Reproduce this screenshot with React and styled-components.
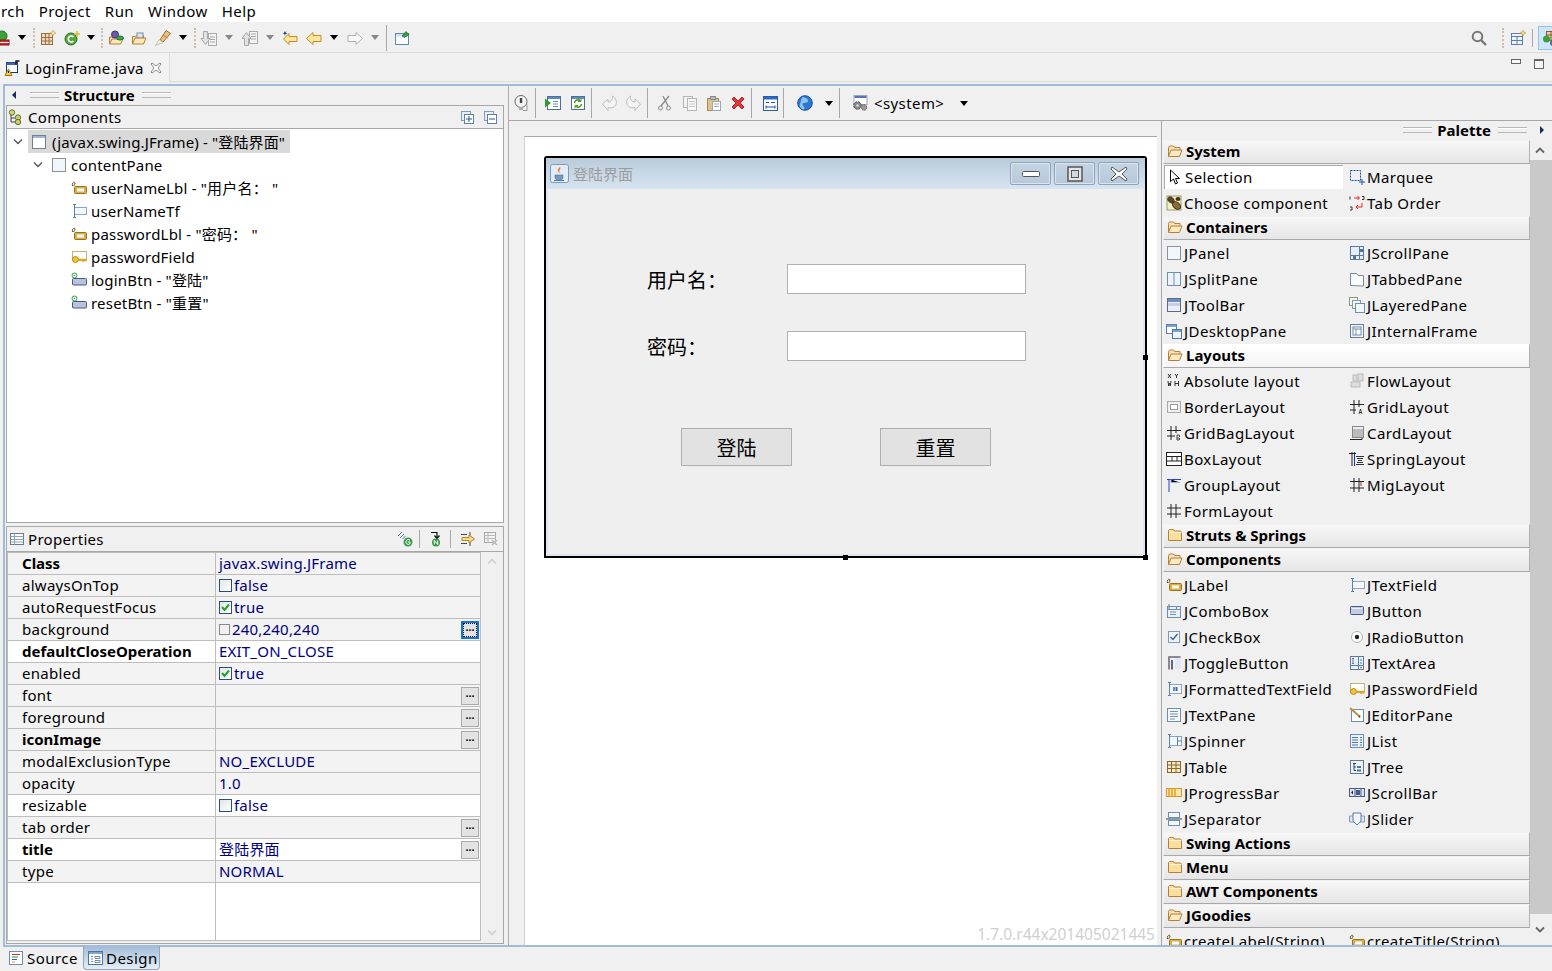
import React from "react";
import styled, { createGlobalStyle } from "styled-components";

const FONT = `"Noto Sans", "Noto Sans CJK SC", sans-serif`;

const Global = createGlobalStyle`
  html, body { margin: 0; padding: 0; background: #f0f0f0; overflow: hidden; }
  body { font: 15px ${FONT}; color: #000; letter-spacing: .3px; }
  * { box-sizing: border-box; }
`;

const Page = styled.div`width:1552px;height:971px;display:flex;flex-direction:column;overflow:hidden;background:#f0f0f0;`;
const MenuBar = styled.div`height:22px;flex:none;background:#fff;display:flex;align-items:center;gap:14px;padding-left:1px;line-height:22px;letter-spacing:.45px;`;
const MainBar = styled.div`height:31px;flex:none;display:flex;align-items:center;padding-top:1px;border-bottom:1px solid #dcdcdc;overflow:hidden;`;
const Spacer = styled.div`flex:1;`;
const Svg = styled.svg`display:block;width:16px;height:16px;flex:none;margin-left:${p => p.$ml || 0}px;overflow:visible;`;
const Arrow = styled.i`display:block;flex:none;width:0;height:0;border-left:4.5px solid transparent;border-right:4.5px solid transparent;border-top:5px solid ${p => p.$off ? "#888" : "#000"};margin-left:${p => p.$ml || 0}px;`;
const Dots = styled.i`display:block;flex:none;width:2px;height:20px;border-left:2px dotted #c9c2a8;margin-left:${p => p.$ml || 0}px;`;
const Sep = styled.i`display:block;flex:none;width:1px;height:${p => p.$h || 30}px;background:${p => p.$c || "#a8a8a8"};margin-left:${p => p.$ml || 0}px;`;
const ActiveTool = styled.div`flex:none;margin:0 -10px 0 5px;width:24px;height:24px;padding:3px;background:#cfe6f8;border:1px solid #90c4ec;`;

const TabRow = styled.div`height:29px;flex:none;display:flex;border-bottom:1px solid #dcdcdc;`;
const EditorTab = styled.div`width:170px;height:29px;display:flex;align-items:center;background:#f2f2f2;border-right:1px solid #dcdcdc;padding-left:5px;gap:4px;letter-spacing:.15px;`;
const TabClose = styled.svg`width:12px;height:12px;margin-left:3px;`;
const ViewControls = styled.div`margin-left:auto;display:flex;align-items:flex-start;gap:13px;padding:6px 8px 0 0;`;
const MinBtn = styled.i`display:block;width:10px;height:5px;border:1px solid #666;background:#f5f5f5;`;
const MaxBtn = styled.i`display:block;width:10px;height:10px;border:1px solid #666;border-top-width:2px;background:#f5f5f5;`;

const Editor = styled.div`margin:2px 0 0 3px;height:863px;flex:none;display:flex;border-top:2px solid #a1bcd8;border-bottom:2px solid #a1bcd8;border-left:2px solid #a1bcd8;`;
const LeftColumn = styled.div`width:504px;flex:none;display:flex;flex-direction:column;border-right:1px solid #ababab;padding:0 4px 1px 1px;`;
const StructureHead = styled.div`height:19px;flex:none;display:flex;align-items:center;padding:0 0 2px 6px;`;
const SideTri = styled.i`display:block;flex:none;width:0;height:0;border-top:4px solid transparent;border-bottom:4px solid transparent;${p => p.$right ? "border-left:4px solid #12305a;" : "border-right:4px solid #12305a;"}`;
const Grip = styled.i`display:block;flex:none;width:29px;height:6px;border-top:1px solid #b8b8b8;border-bottom:1px solid #b8b8b8;margin:${p => p.$m || "0"};box-shadow:inset 0 1px 0 #fff;`;
const Title = styled.b`font-weight:700;font-size:15px;letter-spacing:0;white-space:nowrap;`;
const Box = styled.section`border:1px solid #a8a8a8;display:flex;flex-direction:column;${p => p.$h ? `height:${p.$h}px;flex:none;margin-top:3px;` : "flex:1;"}`;
const BoxHead = styled.div`height:${p => p.$h || 23}px;flex:none;display:flex;align-items:center;padding-left:${p => p.$pl || 1}px;gap:${p => p.$gap || 3}px;border-bottom:1px solid #a8a8a8;background:#f0f0f0;`;
const HeadTools = styled.div`margin-left:auto;display:flex;align-items:center;padding-right:${p => p.$pr}px;`;
const Tree = styled.div`flex:1;background:#fff;padding-top:1px;`;
const TreeRow = styled.div`height:23px;display:flex;align-items:center;padding-left:${p => p.$pad}px;white-space:nowrap;letter-spacing:.2px;`;
const Chevron = styled.svg`width:10px;height:7px;flex:none;`;
const Selected = styled.div`display:flex;align-items:center;gap:5px;height:23px;background:#d9d9d9;margin-left:5px;padding:0 5px 0 3px;letter-spacing:.15px;`;
const NodeLabel = styled.span`margin-left:${p => p.$ml || 4}px;`;

const PropTable = styled.div`flex:1;display:flex;background:#f0f0f0;`;
const Grid = styled.div`width:474px;flex:none;border:1px solid #bdbdbd;margin-bottom:2px;background:#fff;display:flex;flex-direction:column;`;
const PropRow = styled.div`height:22px;flex:none;display:flex;border-bottom:1px solid #bdbdbd;background:${p => p.$white ? "#fff" : "#f3f3f3"};`;
const PropName = styled.div`width:208px;flex:none;padding-left:14px;border-right:1px solid #bdbdbd;line-height:21px;font-weight:${p => p.$bold ? 700 : 400};letter-spacing:${p => p.$bold ? 0 : ".28px"};white-space:nowrap;`;
const PropValue = styled.div`flex:1;display:flex;align-items:center;padding-left:3px;padding-right:1px;color:#00007f;line-height:21px;letter-spacing:.2px;white-space:nowrap;`;
const EmptyRow = styled.div`flex:1;display:flex;`;
const EmptyCell = styled.div`width:208px;border-right:1px solid #bdbdbd;`;
const Check = styled.i`display:flex;align-items:center;justify-content:center;width:13px;height:13px;flex:none;margin-right:2px;border:1px solid #25507c;background:linear-gradient(135deg,#e4e4e4,#fff);`;
const Swatch = styled.i`display:block;width:11px;height:11px;flex:none;margin-right:2px;border:1px solid #888;background:#f0f0f0;`;
const Ellipsis = styled.div`width:18px;height:18px;margin-left:auto;flex:none;display:flex;align-items:center;justify-content:center;padding-bottom:6px;background:#e3e3e3;border:${p => p.$focus ? "2px solid #0a78e0" : "1px solid #aaa"};${p => p.$focus ? "outline:1px dotted #000;outline-offset:-3px;" : ""}color:#000;font:700 11px/8px "Liberation Sans",sans-serif;letter-spacing:0;`;
const PropScroll = styled.div`flex:1;display:flex;flex-direction:column;justify-content:space-between;align-items:center;padding:6px 0 7px;`;

const RightColumn = styled.div`flex:1;min-width:0;display:flex;flex-direction:column;`;
const DesignBar = styled.div`height:35px;flex:none;display:flex;align-items:center;border-bottom:1px solid #a8a8a8;background:#f0f0f0;`;
const SystemLabel = styled.span`margin-left:6px;width:70px;white-space:nowrap;letter-spacing:.4px;`;
const Body = styled.div`flex:1;min-height:0;display:flex;`;
const CanvasPane = styled.div`width:652px;flex:none;padding:15px 4px 0 15px;display:flex;`;
const Canvas = styled.div`flex:1;position:relative;background:#fff;border-top:1px solid #a8a8a8;border-left:1px solid #d0d0d0;overflow:hidden;`;
const Version = styled.span`position:absolute;right:2px;bottom:1px;color:#cfcfcf;font-size:15.5px;line-height:20px;letter-spacing:0;white-space:nowrap;`;
const Frame = styled.div`position:absolute;left:19px;top:19px;width:603px;height:402px;border:2px solid #000;border-radius:3px 3px 0 0;background:#efefef;display:flex;flex-direction:column;letter-spacing:0;`;
const Handle = styled.i`position:absolute;width:5px;height:5px;background:#000;left:${p => p.$x}px;top:${p => p.$y}px;`;
const WinBar = styled.div`height:31px;flex:none;display:flex;align-items:center;padding:0 6px 0 4px;background:linear-gradient(#b9cad9,#d7e5f2);`;
const WinTitle = styled.span`color:#9c9c9c;font-size:15px;margin-left:4px;`;
const WinButtons = styled.div`margin-left:auto;display:flex;gap:3px;`;
const WinButton = styled.div`width:41px;height:23px;display:flex;align-items:center;justify-content:center;border:1px solid #8ea4ba;border-radius:2px;background:linear-gradient(#c4d4e2,#b6c8da);box-shadow:inset 0 0 0 1px #dbe5ee;`;
const WinBody = styled.div`flex:1;border:solid #dbe6f0;border-width:0 2px 2px;padding:75px 0 0 99px;display:flex;flex-direction:column;`;
const FormRow = styled.div`display:flex;align-items:center;height:30px;margin-bottom:37px;`;
const FormLabel = styled.label`width:140px;flex:none;font-size:20px;line-height:30px;position:relative;top:2px;`;
const Input = styled.div`width:239px;height:30px;border:1px solid #b0b0b0;background:#fff;`;
const ButtonRow = styled.div`display:flex;gap:88px;margin:30px 0 0 34px;`;
const FormButton = styled.div`width:111px;height:38px;border:1px solid #aeaeae;background:#e2e2e2;font-size:20px;line-height:40px;text-align:center;overflow:hidden;`;

const Palette = styled.div`flex:1;min-width:0;display:flex;flex-direction:column;border-left:1px solid #a8a8a8;`;
const PaletteHead = styled.div`height:19px;flex:none;display:flex;align-items:center;justify-content:flex-end;padding:0 8px 2px 0;`;
const PaletteBody = styled.div`flex:1;min-height:0;display:flex;overflow:hidden;`;
const PaletteList = styled.div`width:368px;flex:none;padding-left:1px;overflow:hidden;`;
const Category = styled.div`height:24px;display:flex;align-items:center;gap:3px;padding:0 0 2px 3px;font-weight:700;letter-spacing:0;border:1px solid ${p => p.$hi ? "#fff" : "#f2f2f2"};border-right-color:#b0b0b0;border-bottom-color:#a8a8a8;background:linear-gradient(${p => p.$hi ? "#fff,#f4f4f4" : "#f7f7f7,#e6e6e6"});`;
const Items = styled.div`display:grid;grid-template-columns:183px 1fr;grid-auto-rows:26px;background:#f0f0f0;letter-spacing:.42px;`;
const Item = styled.div`display:flex;align-items:center;gap:2px;padding-left:3px;white-space:nowrap;${p => p.$sel ? "background:#fff;height:24px;margin:1px 3px 0 1px;padding:0 0 2px 2px;border-top:1px solid #aaa;border-left:1px solid #aaa;" : ""}`;
const PaletteScroll = styled.div`flex:1;display:flex;flex-direction:column;`;
const ScrollBtn = styled.div`height:${p => p.$h}px;flex:none;display:flex;align-items:center;justify-content:center;padding-right:3px;`;
const Track = styled.div`flex:1;background:#c9c9c9;`;

const BottomTabs = styled.div`height:24px;flex:none;display:flex;margin-top:-1px;padding-left:3px;letter-spacing:.45px;`;
const PageTab = styled.div`width:${p => p.$w}px;height:24px;display:flex;align-items:center;gap:3px;padding-left:${p => p.$pl}px;${p => p.$on ? "background:linear-gradient(#a1bcd8,#e6eef6);border:1px solid #8ea7bf;border-top:0;border-radius:0 0 4px 4px;" : ""}`;

const I = {
  run: <><circle cx="8" cy="6" r="5" fill="#3aa23a" stroke="#1f6f1f"/><rect x="6" y="10" width="9" height="5" fill="#d92b2b" stroke="#8a1010"/><path d="M6 12.5h9" stroke="#fff"/></>,
  newFrame: <><rect x="1.5" y="3.5" width="11" height="11" fill="#eed9bc" stroke="#9a7040"/><path d="M1.5 7.5h11M1.5 11h11M5.5 3.5v11M9 3.5v11" stroke="#9a7040"/><path d="M13 0l1 2 2 1-2 1-1 2-1-2-2-1 2-1z" fill="#f7e6a8" stroke="#b8902a" strokeWidth=".5"/></>,
  newClass: <><circle cx="7" cy="9" r="6" fill="#4fa83d" stroke="#2b6d21"/><path d="M9.5 7a3 3 0 1 0 0 4" fill="none" stroke="#fff" strokeWidth="1.6"/><path d="M13 1v6M10 4h6" stroke="#e5b83a" strokeWidth="1.5"/></>,
  openType: <><path d="M1.5 14V7h10v2" fill="#f7e3b5" stroke="#b5813a"/><path d="M1.5 14l2.5-5h11l-2.5 5z" fill="#fbe9b9" stroke="#b5813a"/><circle cx="7" cy="4.5" r="3.5" fill="#6a5aa8" stroke="#3f3278"/><ellipse cx="12" cy="8" rx="3.5" ry="2" fill="#3fa648" stroke="#256d2b"/></>,
  openFolder: <><path d="M1.5 14V6.5h3l1-1h7v3" fill="#f7e3b5" stroke="#b5813a"/><rect x="6" y="3" width="6" height="5" fill="#dbe8f4" stroke="#6f8fb0"/><path d="M1.5 14l2.5-6h11l-2.5 6z" fill="#fbe9b9" stroke="#b5813a"/></>,
  torch: <><path d="M5 10L11 .5 15.5 3.5 8 12z" fill="#e9c184" stroke="#9a7238"/><path d="M8 5l4.5 3" stroke="#b5813a"/><path d="M.5 15.5L4 9.5 8 12.5z" fill="#f6f2dc" stroke="#c4c4aa"/></>,
  nextAnn: <><rect x="7.5" y="3.5" width="8" height="12" fill="#f3f3f3" stroke="#aaa"/><path d="M9 7h5M9 9.5h5M9 12h5" stroke="#aaa"/><path d="M2.5 1.5h4v7h2.5l-4.500 6-4.500-6h2.500z" fill="#e2e2e2" stroke="#a8a8a8"/></>,
  prevAnn: <><rect x="7.5" y="1.5" width="8" height="12" fill="#f3f3f3" stroke="#aaa"/><path d="M9 4h5M9 6.5h5M9 9h5" stroke="#aaa"/><path d="M2.5 15.5h4v-7h2.5l-4.500-6-4.500 6h2.500z" fill="#e2e2e2" stroke="#a8a8a8"/></>,
  lastEdit: <><path d="M7 3.5v3h8v5H7v3L1.5 9z" fill="#fde6a1" stroke="#c58d1e"/><path d="M2 1l1 1.5L4.5 1 4 3l1.5 1L3.5 4 3 6 2.3 4 .5 4 2 3z" fill="#2c4f88"/></>,
  back: <><path d="M7 2.5v3h8v6H7v3L.5 8.5z" fill="#fde6a1" stroke="#c58d1e"/></>,
  forward: <><path d="M9 2.5v3H1v6h8v3l6.5-6z" fill="#f7f7f7" stroke="#b0b0b0"/></>,
  pinWin: <><rect x=".5" y="3.5" width="13" height="11" fill="#f8fbff" stroke="#5f86ad"/><rect x="1" y="4" width="12" height="2.5" fill="#cfe0f0"/><path d="M7 6l4-4.500 3 3-4.500 3z" fill="#38a044" stroke="#1d6a28" strokeWidth=".7"/></>,
  search: <><circle cx="6.5" cy="6.5" r="4.8" fill="none" stroke="#777" strokeWidth="2"/><path d="M10 10l5 5" stroke="#777" strokeWidth="2.4"/></>,
  persp: <><rect x="1.5" y="3.5" width="11" height="11" fill="#eef3f8" stroke="#5c80a8"/><path d="M1.5 6.5h11M1.5 10.5h11M7 6.5v8" stroke="#5c80a8"/><path d="M13 0l1 2 2 1-2 1-1 2-1-2-2-1 2-1z" fill="#f7d774" stroke="#b8902a" strokeWidth=".5"/></>,
  perspOn: <><rect x="4.5" y="1.5" width="10" height="9" fill="#e8cfa8" stroke="#8a5a2c"/><path d="M4.5 5h10M9 1.5v9" stroke="#8a5a2c"/><circle cx="4.5" cy="9" r="3.5" fill="#3aa23a"/><circle cx="11" cy="13" r="3" fill="#6a5aa8"/></>,
  file: <><rect x="1.5" y="2.5" width="11" height="10" fill="#fff" stroke="#123a7a"/><rect x="1.5" y="2.5" width="11" height="2.5" fill="#3c63a8"/><path d="M11 4.5V1h3.500" fill="none" stroke="#111" strokeWidth="1.4"/><path d="M3.5 9L7 15.5H0z" fill="#f6d040" stroke="#9a7a10"/><path d="M3.5 11v2" stroke="#222"/></>,
  comps: <><circle cx="4" cy="3.5" r="2.7" fill="#d6d08c" stroke="#5a7a20"/><circle cx="10" cy="8.5" r="2.7" fill="#cfc878" stroke="#5a7a20"/><circle cx="10" cy="13" r="2.7" fill="#cfc878" stroke="#5a7a20"/><path d="M3 6v7h4M3 9h4" fill="none" stroke="#444"/></>,
  expand: <><rect x="3.5" y="2.5" width="9" height="9" fill="#e8eff7" stroke="#7e9cbc"/><rect x="6.5" y="5.5" width="9" height="9" fill="#fff" stroke="#5c80a8"/><path d="M8 10h6M11 7v6" stroke="#2a5a8e"/></>,
  collapse: <><rect x="3.5" y="2.5" width="9" height="9" fill="#e8eff7" stroke="#7e9cbc"/><rect x="6.5" y="5.5" width="9" height="9" fill="#fff" stroke="#5c80a8"/><path d="M8 10h6" stroke="#2a5a8e"/></>,
  frame: <><rect x="1.5" y="1.5" width="13" height="13" fill="#fff" stroke="#6f7f90"/><rect x="2" y="2" width="12" height="2" fill="#9db8d6"/></>,
  panel: <><rect x="1.5" y="1.5" width="13" height="13" fill="#f2f6fb" stroke="#8892a0"/></>,
  label: <><path d="M1.5 6c-1-3 2-5 2.5-3s-2 1-1 3" fill="none" stroke="#6a4a10"/><rect x="3.5" y="6.5" width="12" height="7" rx="1" fill="#dcae48" stroke="#9a7018"/><rect x="6" y="8.5" width="7" height="3" fill="#fff"/></>,
  text: <><rect x="3.5" y="4.5" width="12" height="7" fill="#f4f8fc" stroke="#8aa6c4"/><path d="M2 1.5h3M2 14.5h3M3.5 1.5v13" stroke="#5c80a8"/></>,
  key: <><rect x="1.5" y="2.5" width="14" height="9" fill="#fff" stroke="#c9b070"/><circle cx="4.5" cy="10.5" r="3" fill="#f2c530" stroke="#b8881e"/><path d="M7 10.5h8M12 10.5v2.5M14.5 10.5v2" stroke="#d8a520" strokeWidth="1.6"/></>,
  btn: <><circle cx="3.5" cy="3.5" r="2.5" fill="#fff" stroke="#2e9a46"/><circle cx="3.5" cy="3.5" r=".8" fill="#2e9a46"/><rect x="1.5" y="6.5" width="14" height="6.5" rx="1" fill="#b9c4dc" stroke="#465a86"/></>,
  propTable: <><rect x="1.5" y="2.5" width="13" height="11" fill="#fff" stroke="#667c95"/><path d="M1.5 5.5h13M1.5 8.5h13M1.5 11h13M5.5 2.5v11" stroke="#8ea3ba"/></>,
  greenG: <><path d="M1 5l4-4M3 7l4-4M5.5 8l3-3" stroke="#4b7aa8"/><circle cx="11" cy="11" r="4.5" fill="#3f9a4b"/><path d="M13 9.3a2.4 2.4 0 1 0 0 3.4v-1.700h-2" fill="none" stroke="#fff"/></>,
  nullN: <><path d="M3 1.5h6v5M6.5 4.5L9 7.5l2.500-3" fill="none" stroke="#111" strokeWidth="1.2"/><circle cx="8" cy="11.5" r="4" fill="#379a45"/><path d="M6.3 13.5v-4l3.400 4v-4" fill="none" stroke="#fff"/></>,
  events: <><path d="M1 3.5h6M1 12.5h6M10 1v5M10 10v5" stroke="#445"/><path d="M2 6.5h7V4l5.500 4-5.500 4V9.5H2z" fill="#f6dc8e" stroke="#b8861e"/></>,
  sheet: <><rect x="1.5" y="1.5" width="11" height="10" fill="#f2f2f2" stroke="#aaa"/><path d="M1.5 4.5h11M1.5 7.5h11M5 1.5v10" stroke="#bbb"/><path d="M9 9l5 5M14 9l-5 5" stroke="#bbb" strokeWidth="1.5"/></>,
  source: <><rect x="1.5" y="1.5" width="13" height="13" fill="#fff" stroke="#6d8eb0"/><path d="M4 4.5h8" stroke="#c33"/><path d="M4 7h6" stroke="#2a9a46"/><path d="M4 9.5h5" stroke="#2a62c0"/><path d="M4 12h3" stroke="#e0a020"/></>,
  design: <><rect x="1.5" y="1.5" width="14" height="13" fill="#fff" stroke="#4f74a0"/><rect x="2" y="2" width="13" height="2" fill="#7da3cd"/><path d="M4 6.5h2M4 9h2M4 11.5h2M8 6.5h5v2H8zM8 10.5h5v2H8z" fill="none" stroke="#6d8eb0"/></>,
  bulb: <><circle cx="7" cy="6.5" r="6" fill="#f4f4f4" stroke="#666"/><path d="M7 3v5" stroke="#444" strokeWidth="2.4"/><rect x="5" y="12" width="4" height="3" fill="#aaa"/><path d="M13 9.5v6H9" fill="none" stroke="#999"/></>,
  sourceView: <><rect x="2.5" y="1.5" width="13" height="13" fill="#fff" stroke="#4f6f95"/><rect x="3" y="2" width="12" height="2" fill="#5a8cc2"/><path d="M8 6.5h5M8 9h5M8 11.5h5" stroke="#6d8eb0"/><path d="M0 3.5l6 4.5-6 4.500z" fill="#2e9a30"/></>,
  refresh: <><rect x="1.5" y="1.5" width="13" height="13" fill="#fff" stroke="#4f6f95"/><rect x="2" y="2" width="12" height="2" fill="#5a8cc2"/><path d="M4.5 8a3.5 3.5 0 0 1 6-2M11.5 9a3.5 3.5 0 0 1-6 2" fill="none" stroke="#4f9a1e" strokeWidth="1.6"/><path d="M11 3.5v3H8M5 13.5v-3h3" fill="none" stroke="#4f9a1e"/></>,
  undo: <><path d="M.5 9L6 4v3C9 7 11 5 10.5 1c4.500 3 5 8 2 10.500C10.500 13 8 13 6 12.500v3z" fill="#f4f4f4" stroke="#bcbcbc"/></>,
  redo: <><path d="M15.5 9L10 4v3C7 7 5 5 5.500 1 1 4 .5 9 3.500 11.500 5.500 13 8 13 10 12.500v3z" fill="#f4f4f4" stroke="#bcbcbc"/></>,
  cut: <><path d="M4 11L12 1M11 11L6 1" stroke="#8a8a8a" strokeWidth="1.3"/><circle cx="3.5" cy="13" r="2" fill="none" stroke="#8a8a8a"/><circle cx="11.5" cy="13" r="2" fill="none" stroke="#8a8a8a"/></>,
  copy: <><rect x="1.5" y="1.5" width="9" height="11" fill="#f3f3f3" stroke="#b5b5b5"/><rect x="5.5" y="3.5" width="9" height="12" fill="#f7f7f7" stroke="#b5b5b5"/><path d="M7 6.5h6M7 9h6M7 11.5h6" stroke="#c8c8c8"/></>,
  paste: <><rect x="1.5" y="3.5" width="11" height="12" fill="#dfc491" stroke="#a8894e"/><rect x="4.5" y="1.5" width="5" height="3" fill="#bbb" stroke="#888"/><rect x="6.5" y="6.5" width="8" height="9" fill="#fff" stroke="#9ab"/><path d="M8 9h5M8 11.5h5" stroke="#9ab"/></>,
  del: <><path d="M2 4l2-2 4 4 4-4 2 2-4 4 4 4-2 2-4-4-4 4-2-2 4-4z" fill="#e2383a" stroke="#b82426"/></>,
  layoutBtn: <><rect x="1.5" y="1.5" width="14" height="14" fill="#fff" stroke="#2a5aa8"/><rect x="2" y="2" width="13" height="2.5" fill="#2a6ac8"/><path d="M4 7.5h3M9 7.5h4M4 12h9M4 10.5v3M13 10.5v3" stroke="#1a4fb0"/></>,
  globe: <><circle cx="8" cy="8" r="7.3" fill="#2a78d0" stroke="#17509a"/><path d="M6 2c2 1 4 1 5 3s-2 3-4 3-2 2 0 4-1 3-2 2-3-3-2-5 1-6 3-7z" fill="#8fc4f2"/></>,
  gear: <><rect x="2" y=".5" width="13" height="9" fill="#fff" stroke="#9aa"/><rect x="2.5" y="1" width="12" height="2" fill="#5a6ec2"/><circle cx="5.5" cy="10.5" r="3.8" fill="#888" stroke="#555" strokeDasharray="2 1"/><circle cx="5.5" cy="10.5" r="1.3" fill="#ddd"/><circle cx="12" cy="12.5" r="2.8" fill="#999" stroke="#666" strokeDasharray="1.5 1"/></>,
  java: <><rect x=".5" y=".5" width="18" height="18" rx="2" fill="#e3ecf4" stroke="#7d99b5"/><path d="M10 3c2 2-2 3 0 6-3-1-3-4 0-6z" fill="#e8843a"/><path d="M5 11h8v2.500a2 2 0 0 1-2 2H7a2 2 0 0 1-2-2z" fill="#6f9cc2" stroke="#4f7397" strokeWidth=".6"/><path d="M4 16.500h10" stroke="#4f7397"/></>,
  folderOpen: <><path d="M1.5 13.5V4.5l1-1.500h4l1 1.500h5.500v2.500" fill="#f7e3b5" stroke="#b5813a"/><path d="M1.5 13.5L4 7h11l-2.500 6.500z" fill="#fbe9c0" stroke="#b5813a"/></>,
  folderClosed: <><path d="M1.5 13.5v-10l1-1h4l1 1.500h6l1 1v8.500z" fill="#fbdf9c" stroke="#b5813a"/><path d="M2 5.5h12.500" stroke="#fdf3d6"/></>,
  cursor: <><path d="M3.5 1v11.500l3-2.500 2 5 2-1-2-4.500h4z" fill="#fff" stroke="#000"/></>,
  marquee: <><rect x="1.5" y="1.5" width="10" height="10" fill="none" stroke="#1a4fb0" strokeDasharray="2 1"/><path d="M13 10v6M10 13h6" stroke="#1a4fb0"/></>,
  beans: <><rect x="1" y="1" width="14" height="14" fill="#eef0c8" stroke="#9a9a70"/><ellipse cx="5" cy="5" rx="4" ry="3" fill="#5a4326" transform="rotate(40 5 5)"/><ellipse cx="10.5" cy="10.5" rx="4.5" ry="3.2" fill="#8a6a36" stroke="#3f2f16" transform="rotate(40 10.5 10.5)"/><ellipse cx="12" cy="4" rx="2.5" ry="2" fill="#463218"/></>,
  tabOrder: <><path d="M1 1.5v3M13 1.5h2v3h-2M1 12h2v3H1" fill="none" stroke="#333"/><path d="M5 3h5M8.5 1l2 2-2 2M13 8v4H7M9 10l-2 2 2 2" fill="none" stroke="#e22"/></>,
  scrollPane: <><rect x="1.5" y="1.5" width="13" height="13" fill="#e6edf5" stroke="#5c7a9e"/><path d="M10.5 1.5v13M1.5 10.5h13" stroke="#5c7a9e"/><rect x="11" y="4" width="3" height="3" fill="#4f74a0"/><rect x="4" y="11" width="3" height="3" fill="#4f74a0"/></>,
  split: <><rect x="1.5" y="1.5" width="13" height="13" fill="#eef3f9" stroke="#6f8fb0"/><path d="M8 1.5v13" stroke="#6f8fb0"/></>,
  tabbed: <><path d="M1.5 14.5v-12h6l1.500 2h5.500v10.500z" fill="#fafbfd" stroke="#7a8a9a"/></>,
  toolbar: <><rect x="1.5" y="1.5" width="13" height="13" fill="#eef" stroke="#5a6b86"/><rect x="2" y="2" width="12" height="3" fill="#6d8ec2"/><rect x="2" y="6" width="12" height="3" fill="#c6cee4"/></>,
  layered: <><rect x=".5" y=".5" width="8" height="8" fill="#f5f5ef" stroke="#8a9a7a"/><rect x="3.5" y="3.5" width="8" height="8" fill="#f2f6fb" stroke="#8a9aa8"/><rect x="6.5" y="6.5" width="9" height="9" fill="#f2f6fb" stroke="#6f8fb0"/></>,
  desktop: <><rect x=".5" y="1.5" width="10" height="9" fill="#fff" stroke="#5c80a8"/><rect x="1" y="2" width="9" height="2" fill="#7da3cd"/><rect x="6.5" y="6.5" width="9" height="9" fill="#eef3f9" stroke="#4f74a0"/><rect x="7" y="7" width="8" height="2" fill="#7da3cd"/></>,
  internal: <><rect x="1.5" y="1.5" width="13" height="13" fill="#eef3f9" stroke="#6f7f90"/><rect x="4" y="4" width="8" height="8" fill="#fff" stroke="#6f8fb0"/><path d="M4 6h8M7 6v6" stroke="#6f8fb0"/></>,
  absolute: <><path d="M2 1l3 4M5 1L2 5M9 1l1.500 2L12 1M10.500 3v2M2 8l.7 5 .8-3 .8 3 .7-5M9 8v5M12.500 8v5M9 10.500h3.500" fill="none" stroke="#333"/></>,
  flow: <><rect x="4" y="2" width="4" height="6" fill="#ddd" stroke="#bbb"/><rect x="9" y="1" width="5" height="7" fill="#ddd" stroke="#bbb"/><rect x="2" y="9" width="9" height="5" fill="#ddd" stroke="#bbb"/></>,
  borderL: <><rect x="1.5" y="2.5" width="13" height="11" fill="#eee" stroke="#aaa"/><rect x="4.5" y="5.5" width="7" height="5" fill="#fff" stroke="#999"/></>,
  gridA: <><path d="M1 5.5h14M1 11h6M5 1v14M10 1v7" stroke="#222"/><path d="M10 15l1.500-5 1.500 5M10.500 13.500h2" fill="none" stroke="#222" strokeWidth=".8"/></>,
  gridB: <><path d="M1 5.5h14M1 11h8M5 1v14M10 1v7" stroke="#222"/><path d="M11 10v5h2l1-1-1-1h-2M11 10h2l1 1-1 1" fill="none" stroke="#222" strokeWidth=".8"/></>,
  card: <><path d="M1 14.5h12V3" fill="none" stroke="#222"/><rect x="3.5" y="1.5" width="11" height="11" fill="#bbb" stroke="#888"/><rect x="4" y="2" width="10" height="2" fill="#eee"/></>,
  box: <><rect x=".5" y="1.5" width="15" height="13" fill="#fff" stroke="#222"/><path d="M.5 5.5h15M.5 10h15M6 5.5V10M11 5.5V10" stroke="#222"/></>,
  spring: <><path d="M0 2.5h7M3 1v14" stroke="#222"/><path d="M5.5 1v14" stroke="#1a2fc8"/><path d="M7 5.5h8M8 7.5h6M9 9.5h4M8 11.5h6M7 13.5h8" stroke="#333"/></>,
  group: <><path d="M1 2.5h14M3 2.5V15" stroke="#2a3fd0"/><path d="M5 2.5v3h9" stroke="#a0aee8"/></>,
  mig: <><path d="M1 4.5h14M1 11h14M5 1v14M10 1v14" stroke="#222"/><path d="M12 5v4" stroke="#a33"/></>,
  form: <><path d="M1 5h14M1 11h14M5 1v14M10 1v14" stroke="#222"/></>,
  combo: <><rect x="1.5" y="3.5" width="13" height="11" fill="#eaf0f7" stroke="#6f8fb0"/><path d="M1.5 6.5h13M4 9h6M4 11.5h6M10.5 3.5v3" stroke="#6f8fb0"/><path d="M3 1v5" stroke="#5c80a8"/></>,
  jbutton: <><rect x="1.5" y="3.5" width="13" height="8" rx="1" fill="#c3cce4" stroke="#465a86"/><path d="M3 5.5h10" stroke="#eef"/></>,
  checkbox: <><rect x="2.5" y="2.5" width="11" height="11" fill="#eef3f9" stroke="#7e9cbc"/><path d="M4.5 8l2.500 2.500 4.500-5.500" fill="none" stroke="#3a5f8a" strokeWidth="1.3"/></>,
  radio: <><circle cx="8" cy="8" r="5.5" fill="#fff" stroke="#a8bca8"/><circle cx="8" cy="8" r="2.2" fill="#222"/></>,
  toggle: <><rect x="9" y="2" width="6" height="12" fill="#e4e8f4"/><path d="M3 14.5V2h11.500" fill="none" stroke="#667" strokeWidth="1.5"/><path d="M6 14.5V5" stroke="#667" strokeWidth="2"/></>,
  textArea: <><rect x="1.5" y="1.5" width="13" height="13" fill="#eaf0f7" stroke="#5c7a9e"/><path d="M1.5 10.5h13M9.5 1.5v13M4 3.5v5M3 3.5h2M3 8.5h2M11 5h2M11 8h2M11 12.5h2" stroke="#5c7a9e"/></>,
  formatted: <><rect x="3.5" y="3.5" width="12" height="9" fill="#f4f8fc" stroke="#8aa6c4"/><path d="M2 1.5h3M2 14.5h3M3.5 1.5v13" stroke="#5c80a8"/><path d="M8 6v4M10.5 6v4M7 7h5M7 9h5" stroke="#1a4fb0" strokeWidth=".8"/></>,
  textPane: <><rect x="1.5" y="1.5" width="13" height="13" fill="#f4f8fc" stroke="#6f8fb0"/><path d="M4 4.5h8M4 7h8M4 9.5h8M4 12h5" stroke="#7a92aa"/></>,
  editor: <><rect x="2.5" y="2.5" width="12" height="12" fill="#fff" stroke="#6f8fb0"/><path d="M1 1l9 8" stroke="#b8903e" strokeWidth="2"/><path d="M10 9l1 1" stroke="#333" strokeWidth="2"/></>,
  spinner: <><rect x="3.5" y="3.5" width="12" height="9" fill="#f4f8fc" stroke="#8aa6c4"/><path d="M2 1.5h3M2 14.5h3M3.5 1.5v13M11.5 3.5v9M11.5 8h4" stroke="#5c80a8"/></>,
  list: <><rect x="1.5" y="1.5" width="13" height="13" fill="#eaf0f7" stroke="#6f8fb0"/><path d="M3 4.5h6M3 7h6M3 9.5h6M3 12h6M11 4.5h2M11 7h2M11 9.5h2M11 12h2" stroke="#4f74a0" strokeWidth="1.2"/></>,
  table: <><rect x="1.5" y="2.5" width="13" height="11" fill="#f5e8c8" stroke="#8a6a2c"/><path d="M1.5 6h13M1.5 9.5h13M5.5 2.5v11M10 2.500v11" stroke="#8a6a2c"/></>,
  jtree: <><rect x="1.5" y="1.5" width="13" height="13" fill="#eef3f9" stroke="#5c7a9e"/><path d="M4 4.5h3M5 4.5V11.5h2M5 8h2" fill="none" stroke="#345"/><rect x="8" y="7" width="4" height="2" fill="#4f74a0"/><rect x="8" y="10.5" width="4" height="2" fill="#4f74a0"/></>,
  progress: <><rect x=".5" y="3.5" width="15" height="8" fill="#fbe6b0" stroke="#d49a2e"/><path d="M3 4v7M6 4v7M9 4v7" stroke="#e8a020" strokeWidth="1.5"/></>,
  scrollbar: <><rect x=".5" y="3.5" width="15" height="8" fill="#dfe4f2" stroke="#4a5a86"/><path d="M6 4v7M12 4v7" stroke="#4a5a86"/><path d="M4 5.5l-2 2 2 2z" fill="#223"/><rect x="7" y="5" width="4" height="5" fill="#4a5a86"/></>,
  separator: <><rect x="2.5" y="1.5" width="11" height="5" fill="#f4f8fc" stroke="#6f8fb0"/><rect x="2.5" y="9.5" width="11" height="5" fill="#f4f8fc" stroke="#6f8fb0"/><path d="M0 8h16" stroke="#345"/></>,
  slider: <><path d="M.5 5h15v6H.5z" fill="#dfe7f2" stroke="#7e9cbc"/><path d="M4 2h8v8l-4 4-4-4z" fill="#f2f4fa" stroke="#5c7a9e"/></>,
};
const Ic = ({ n, ml, size }) => <Svg viewBox={size ? `0 0 ${size} ${size}` : "0 0 16 16"} $ml={ml} style={size ? { width: size, height: size } : undefined}>{I[n]}</Svg>;

const ChevDown = () => <Chevron viewBox="0 0 10 7"><path d="M1 1.5l4 4 4-4" fill="none" stroke="#555" strokeWidth="1.4" /></Chevron>;
const ChevUp = ({ c = "#bbb" }) => <Chevron viewBox="0 0 10 7"><path d="M1 5.5l4-4 4 4" fill="none" stroke={c} strokeWidth="1.8" /></Chevron>;
const ChevD = ({ c = "#bbb" }) => <Chevron viewBox="0 0 10 7"><path d="M1 1.5l4 4 4-4" fill="none" stroke={c} strokeWidth="1.8" /></Chevron>;

const treeRows = [
  ["label", 'userNameLbl - "用户名： "'],
  ["text", "userNameTf"],
  ["label", 'passwordLbl - "密码： "'],
  ["key", "passwordField"],
  ["btn", 'loginBtn - "登陆"'],
  ["btn", 'resetBtn - "重置"'],
];

const CheckBox = ({ on }) => (
  <Check>{on && <svg width="11" height="11" viewBox="0 0 11 11"><path d="M2 5l2.5 3L9 2.5" fill="none" stroke="#1fa32e" strokeWidth="2" /></svg>}</Check>
);

const props = [
  { n: "Class", b: 1, v: "javax.swing.JFrame" },
  { n: "alwaysOnTop", v: "false", c: "off" },
  { n: "autoRequestFocus", v: "true", c: "on" },
  { n: "background", v: "240,240,240", sw: 1, e: "focus" },
  { n: "defaultCloseOperation", b: 1, v: "EXIT_ON_CLOSE", w: 1 },
  { n: "enabled", v: "true", c: "on" },
  { n: "font", e: 1 },
  { n: "foreground", e: 1 },
  { n: "iconImage", b: 1, e: 1 },
  { n: "modalExclusionType", v: "NO_EXCLUDE" },
  { n: "opacity", v: "1.0" },
  { n: "resizable", v: "false", c: "off", w: 1 },
  { n: "tab order", e: 1 },
  { n: "title", b: 1, v: "登陆界面", e: 1, w: 1 },
  { n: "type", v: "NORMAL" },
];

const sections = [
  { t: "System", open: 1, items: [["cursor", "Selection", 1], ["marquee", "Marquee"], ["beans", "Choose component"], ["tabOrder", "Tab Order"]] },
  { t: "Containers", open: 1, items: [["panel", "JPanel"], ["scrollPane", "JScrollPane"], ["split", "JSplitPane"], ["tabbed", "JTabbedPane"], ["toolbar", "JToolBar"], ["layered", "JLayeredPane"], ["desktop", "JDesktopPane"], ["internal", "JInternalFrame"]] },
  { t: "Layouts", open: 1, hi: 1, items: [["absolute", "Absolute layout"], ["flow", "FlowLayout"], ["borderL", "BorderLayout"], ["gridA", "GridLayout"], ["gridB", "GridBagLayout"], ["card", "CardLayout"], ["box", "BoxLayout"], ["spring", "SpringLayout"], ["group", "GroupLayout"], ["mig", "MigLayout"], ["form", "FormLayout"]] },
  { t: "Struts & Springs", items: [] },
  { t: "Components", open: 1, items: [["label", "JLabel"], ["text", "JTextField"], ["combo", "JComboBox"], ["jbutton", "JButton"], ["checkbox", "JCheckBox"], ["radio", "JRadioButton"], ["toggle", "JToggleButton"], ["textArea", "JTextArea"], ["formatted", "JFormattedTextField"], ["key", "JPasswordField"], ["textPane", "JTextPane"], ["editor", "JEditorPane"], ["spinner", "JSpinner"], ["list", "JList"], ["table", "JTable"], ["jtree", "JTree"], ["progress", "JProgressBar"], ["scrollbar", "JScrollBar"], ["separator", "JSeparator"], ["slider", "JSlider"]] },
  { t: "Swing Actions", items: [] },
  { t: "Menu", items: [] },
  { t: "AWT Components", items: [] },
  { t: "JGoodies", open: 1, items: [["label", "createLabel(String)"], ["label", "createTitle(String)"]] },
];

export default function App() {
  return (
    <Page>
      <Global />
      <MenuBar>
        {["rch", "Project", "Run", "Window", "Help"].map(m => <span key={m}>{m}</span>)}
      </MenuBar>
      <MainBar>
        <Ic n="run" ml={-6} /><Arrow $ml={8} /><Dots $ml={7} />
        <Ic n="newFrame" ml={5} /><Ic n="newClass" ml={8} /><Arrow $ml={7} /><Dots $ml={6} />
        <Ic n="openType" ml={5} /><Ic n="openFolder" ml={7} /><Ic n="torch" ml={8} /><Arrow $ml={8} /><Dots $ml={7} />
        <Ic n="nextAnn" ml={5} /><Arrow $off $ml={8} /><Ic n="prevAnn" ml={9} /><Arrow $off $ml={8} />
        <Ic n="lastEdit" ml={8} /><Ic n="back" ml={8} /><Arrow $ml={8} /><Ic n="forward" ml={9} /><Arrow $off $ml={8} />
        <Sep $h={26} $ml={7} /><Ic n="pinWin" ml={8} />
        <Spacer />
        <Ic n="search" /><Dots $ml={15} /><Ic n="persp" ml={6} /><Sep $h={18} $ml={6} />
        <ActiveTool><Ic n="perspOn" /></ActiveTool>
      </MainBar>
      <TabRow>
        <EditorTab>
          <Ic n="file" /><span>LoginFrame.java</span>
          <TabClose viewBox="0 0 12 12"><path d="M2 1l4 3 4-3 1 1-3 4 3 4-1 1-4-3-4 3-1-1 3-4-3-4z" fill="#fff" stroke="#888" /></TabClose>
        </EditorTab>
        <ViewControls><MinBtn /><MaxBtn /></ViewControls>
      </TabRow>
      <Editor>
        <LeftColumn>
          <StructureHead>
            <SideTri /><Grip $m="0 5px 0 14px" /><Title>Structure</Title><Grip $m="0 0 0 7px" />
          </StructureHead>
          <Box>
            <BoxHead $gap={4}>
              <Ic n="comps" /><span>Components</span>
              <HeadTools $pr={6}><Ic n="expand" /><Ic n="collapse" ml={7} /></HeadTools>
            </BoxHead>
            <Tree>
              <TreeRow $pad={6}>
                <ChevDown />
                <Selected><Ic n="frame" /><span>(javax.swing.JFrame) - "登陆界面"</span></Selected>
              </TreeRow>
              <TreeRow $pad={26}>
                <ChevDown /><Ic n="panel" ml={8} /><NodeLabel>contentPane</NodeLabel>
              </TreeRow>
              {treeRows.map(([ic, t]) => (
                <TreeRow key={t} $pad={64}><Ic n={ic} /><NodeLabel>{t}</NodeLabel></TreeRow>
              ))}
            </Tree>
          </Box>
          <Box $h={418}>
            <BoxHead $h={25} $pl={2}>
              <Ic n="propTable" /><span>Properties</span>
              <HeadTools $pr={4}>
                <Ic n="greenG" /><Sep $h={18} $ml={6} /><Ic n="nullN" ml={8} /><Sep $h={18} $ml={6} /><Ic n="events" ml={9} /><Ic n="sheet" ml={7} />
              </HeadTools>
            </BoxHead>
            <PropTable>
              <Grid>
                {props.map(p => (
                  <PropRow key={p.n} $white={p.w}>
                    <PropName $bold={p.b}>{p.n}</PropName>
                    <PropValue>
                      {p.c && <CheckBox on={p.c === "on"} />}
                      {p.sw && <Swatch />}
                      {p.v && <span>{p.v}</span>}
                      {p.e && <Ellipsis $focus={p.e === "focus"}>...</Ellipsis>}
                    </PropValue>
                  </PropRow>
                ))}
                <EmptyRow><EmptyCell /></EmptyRow>
              </Grid>
              <PropScroll><ChevUp c="#d4d4d4" /><ChevD c="#d4d4d4" /></PropScroll>
            </PropTable>
          </Box>
        </LeftColumn>
        <RightColumn>
          <DesignBar>
            <Ic n="bulb" ml={5} /><Sep $ml={5} />
            <Ic n="sourceView" ml={9} /><Ic n="refresh" ml={9} /><Sep $ml={5} />
            <Ic n="undo" ml={10} /><Ic n="redo" ml={7} /><Sep $ml={6} />
            <Ic n="cut" ml={9} /><Ic n="copy" ml={9} /><Ic n="paste" ml={8} /><Ic n="del" ml={8} /><Sep $ml={5} />
            <Ic n="layoutBtn" ml={10} /><Sep $ml={5} />
            <Ic n="globe" ml={13} /><Arrow $ml={12} /><Sep $ml={6} />
            <Ic n="gear" ml={12} /><SystemLabel>&lt;system&gt;</SystemLabel><Arrow $ml={16} />
          </DesignBar>
          <Body>
            <CanvasPane>
              <Canvas>
                <Frame>
                  <WinBar>
                    <Ic n="java" size={19} /><WinTitle>登陆界面</WinTitle>
                    <WinButtons>
                      <WinButton><svg width="18" height="6"><rect x=".5" y=".5" width="17" height="5" rx="1" fill="#fff" stroke="#555" /></svg></WinButton>
                      <WinButton><svg width="16" height="16"><rect x="1" y="1" width="14" height="14" fill="#e4e4e4" stroke="#555" strokeWidth="1.5" /><rect x="4.5" y="4.5" width="7" height="7" fill="#cfd9e4" stroke="#555" /></svg></WinButton>
                      <WinButton><svg width="18" height="16"><path d="M2 1l7 5 7-5 1 2-5 5 5 5-1 2-7-5-7 5-1-2 5-5-5-5z" fill="#fff" stroke="#555" /></svg></WinButton>
                    </WinButtons>
                  </WinBar>
                  <WinBody>
                    <FormRow><FormLabel>用户名：</FormLabel><Input /></FormRow>
                    <FormRow><FormLabel>密码：</FormLabel><Input /></FormRow>
                    <ButtonRow><FormButton>登陆</FormButton><FormButton>重置</FormButton></ButtonRow>
                  </WinBody>
                  <Handle $x={597} $y={197} />
                  <Handle $x={297} $y={397} />
                  <Handle $x={597} $y={397} />
                </Frame>
                <Version>1.7.0.r44x201405021445</Version>
              </Canvas>
            </CanvasPane>
            <Palette>
              <PaletteHead><Grip $m="0 5px 0 0" /><Title>Palette</Title><Grip $m="0 13px 0 7px" /><SideTri $right /></PaletteHead>
              <PaletteBody>
                <PaletteList>
                  {sections.map(s => (
                    <React.Fragment key={s.t}>
                      <Category $hi={s.hi}><Ic n={s.open ? "folderOpen" : "folderClosed"} />{s.t}</Category>
                      {s.items.length > 0 && (
                        <Items>
                          {s.items.map(([ic, t, sel]) => <Item key={t} $sel={sel}><Ic n={ic} /><span>{t}</span></Item>)}
                        </Items>
                      )}
                    </React.Fragment>
                  ))}
                </PaletteList>
                <PaletteScroll>
                  <ScrollBtn $h={20}><ChevUp c="#666" /></ScrollBtn>
                  <Track />
                  <ScrollBtn $h={31}><ChevD c="#666" /></ScrollBtn>
                </PaletteScroll>
              </PaletteBody>
            </Palette>
          </Body>
        </RightColumn>
      </Editor>
      <BottomTabs>
        <PageTab $w={80} $pl={5}><Ic n="source" /><span>Source</span></PageTab>
        <PageTab $on $w={77} $pl={3}><Ic n="design" /><span>Design</span></PageTab>
      </BottomTabs>
    </Page>
  );
}
